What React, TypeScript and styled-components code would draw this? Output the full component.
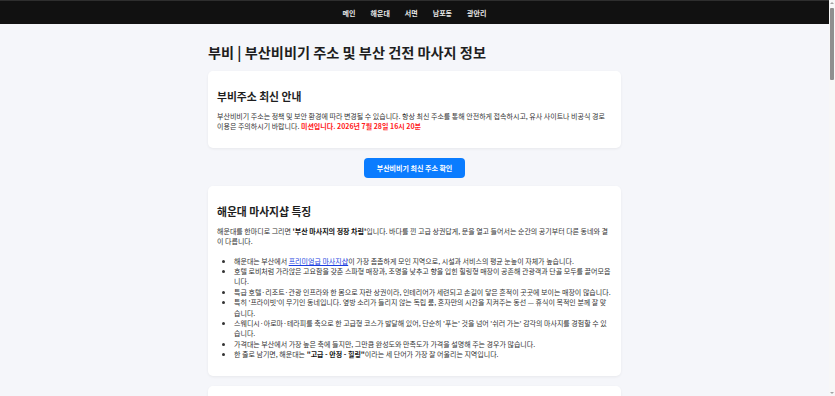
import React from "react";
import styled, { createGlobalStyle } from "styled-components";

const Global = createGlobalStyle`
  html, body { margin: 0; padding: 0; height: 100%; overflow: hidden; }
  #root { height: 100%; }
  body {
    background: #f5f6fa;
    font-family: "Noto Sans CJK KR", "Noto Sans", sans-serif;
    color: #333;
  }
`;

const Shell = styled.div`
  display: flex;
  height: 100vh;
`;

const Page = styled.div`
  flex: 1;
  min-width: 0;
  overflow-y: auto;
  background: #f5f6fa;
  &::-webkit-scrollbar { display: none; }
`;

const Rail = styled.div`
  width: 6px;
  flex: none;
  background: #f7f7f7;
  display: flex;
  flex-direction: column;
  align-items: center;
  padding: 2px 0;
  box-sizing: border-box;
`;

const Arrow = styled.div<{ $down?: boolean }>`
  width: 0;
  height: 0;
  border-left: 2px solid transparent;
  border-right: 2px solid transparent;
  ${(p) => (p.$down ? "border-top: 2px solid #a3a3a3;" : "border-bottom: 2px solid #a3a3a3;")}
  margin-top: ${(p) => (p.$down ? "auto" : "0")};
`;

const Thumb = styled.div`
  width: 4px;
  height: 72px;
  margin-top: 4px;
  background: #8f8f8f;
  border-radius: 1px;
`;

const Nav = styled.nav`
  height: 24px;
  background: #111;
  border-top: 1px solid #2e2e2e;
  box-sizing: border-box;
  display: flex;
  justify-content: center;
  align-items: center;
  gap: 15px;
`;

const NavLink = styled.a`
  color: #e8e8e8;
  font-size: 7px;
  font-weight: 700;
  text-decoration: none;
`;

const Main = styled.main`
  width: 413px;
  margin: 0 auto;
  padding: 20px 0 60px;
  display: flex;
  flex-direction: column;
`;

const Title = styled.h1`
  margin: 0 0 11px;
  font-size: 14.2px;
  line-height: 16px;
  font-weight: 700;
  color: #1e1e1e;
`;

const Card = styled.section`
  background: #fff;
  border-radius: 5px;
  box-shadow: 0 1px 3px rgba(0, 0, 0, 0.06);
  padding: 19px 9px 16px;
  margin-bottom: 10px;
`;

const CardTitle = styled.h2`
  margin: 0 0 8px;
  font-size: 10.8px;
  line-height: 13px;
  font-weight: 700;
  color: #1e1e1e;
`;

const Para = styled.p`
  margin: 0;
  font-size: 7px;
  line-height: 10.4px;
  color: #333;
`;

const Alert = styled.strong`
  color: #ff1a1a;
  font-weight: 700;
`;

const Strong = styled.strong`
  color: #111;
  font-weight: 700;
`;

const Link = styled.a`
  color: #1a3fe0;
  text-decoration: underline;
`;

const List = styled.ul`
  margin: 9px 0 0;
  padding-left: 17px;
  font-size: 7px;
  line-height: 10.4px;
  color: #333;
`;

const ButtonRow = styled.div`
  display: flex;
  justify-content: center;
  margin-bottom: 8px;
`;

const Button = styled.a`
  display: inline-block;
  background: #0a7cff;
  color: #fff;
  font-size: 7px;
  line-height: 8px;
  font-weight: 700;
  padding: 6px 13px;
  border-radius: 4px;
  text-decoration: none;
`;

export default function App() {
  return (
    <Shell>
      <Global />
      <Page>
        <Nav>
          <NavLink href="#">메인</NavLink>
          <NavLink href="#">해운대</NavLink>
          <NavLink href="#">서면</NavLink>
          <NavLink href="#">남포동</NavLink>
          <NavLink href="#">광안리</NavLink>
        </Nav>
        <Main>
          <Title>부비 | 부산비비기 주소 및 부산 건전 마사지 정보</Title>
          <Card>
            <CardTitle>부비주소 최신 안내</CardTitle>
            <Para>
              부산비비기 주소는 정책 및 보안 환경에 따라 변경될 수 있습니다. 항상 최신 주소를 통해
              안전하게 접속하시고, 유사 사이트나 비공식 경로 이용은 주의하시기 바랍니다.{" "}
              <Alert>미션입니다. 2026년 7월 28일 16시 20분</Alert>
            </Para>
          </Card>
          <ButtonRow>
            <Button href="#">부산비비기 최신 주소 확인</Button>
          </ButtonRow>
          <Card>
            <CardTitle>해운대 마사지샵 특징</CardTitle>
            <Para>
              해운대를 한마디로 그리면 <Strong>'부산 마사지의 정장 차림'</Strong>입니다. 바다를 낀 고급
              상권답게, 문을 열고 들어서는 순간의 공기부터 다른 동네와 결이 다릅니다.
            </Para>
            <List>
              <li>
                해운대는 부산에서 <Link href="#">프리미엄급 마사지샵</Link>이 가장 촘촘하게 모인
                지역으로, 시설과 서비스의 평균 눈높이 자체가 높습니다.
              </li>
              <li>
                호텔 로비처럼 가라앉은 고요함을 갖춘 스파형 매장과, 조명을 낮추고 향을 입힌 힐링형
                매장이 공존해 관광객과 단골 모두를 끌어모읍니다.
              </li>
              <li>
                특급 호텔·리조트·관광 인프라와 한 몸으로 자란 상권이라, 인테리어가 세련되고 손길이
                닿은 흔적이 곳곳에 보이는 매장이 많습니다.
              </li>
              <li>
                특히 '프라이빗'이 무기인 동네입니다. 옆방 소리가 들리지 않는 독립 룸, 혼자만의 시간을
                지켜주는 동선 — 휴식이 목적인 분께 잘 맞습니다.
              </li>
              <li>
                스웨디시·아로마·테라피를 축으로 한 고급형 코스가 발달해 있어, 단순히 '푸는' 것을 넘어
                '쉬러 가는' 감각의 마사지를 경험할 수 있습니다.
              </li>
              <li>
                가격대는 부산에서 가장 높은 축에 들지만, 그만큼 완성도와 만족도가 가격을 설명해 주는
                경우가 많습니다.
              </li>
              <li>
                한 줄로 남기면, 해운대는 <Strong>"고급 - 안정 - 힐링"</Strong>이라는 세 단어가 가장 잘
                어울리는 지역입니다.
              </li>
            </List>
          </Card>
          <Card>
            <CardTitle>서면 마사지샵 특징</CardTitle>
            <Para>
              서면은 부산의 한가운데, 교통과 상권이 모두 모이는 곳입니다. 퇴근길이나 약속 사이에
              부담 없이 들르기 좋은 매장이 많습니다.
            </Para>
            <List>
              <li>지하철 환승역을 중심으로 매장이 넓게 퍼져 있어 접근성이 뛰어납니다.</li>
              <li>합리적인 가격대의 코스가 다양해 처음 방문하는 분께도 부담이 적습니다.</li>
              <li>늦은 시간까지 운영하는 매장이 많아 일정에 맞춰 이용하기 편합니다.</li>
            </List>
          </Card>
          <Card>
            <CardTitle>남포동 마사지샵 특징</CardTitle>
            <Para>
              남포동은 오래된 상권의 정취와 관광지의 활기가 함께 있는 동네입니다. 쇼핑과 먹거리
              사이에 잠시 쉬어 가기 좋은 매장이 곳곳에 있습니다.
            </Para>
            <List>
              <li>관광객 동선에 맞춘 짧은 코스가 잘 갖춰져 있습니다.</li>
              <li>전통적인 지압·발 마사지 매장이 많아 피로 회복에 좋습니다.</li>
            </List>
          </Card>
          <Card>
            <CardTitle>광안리 마사지샵 특징</CardTitle>
            <Para>
              광안리는 바다와 야경이 어우러진 휴식의 동네입니다. 해변 산책 뒤 조용히 몸을 풀기 좋은
              감성적인 매장이 많습니다.
            </Para>
            <List>
              <li>오션뷰를 살린 인테리어의 매장이 많아 분위기가 좋습니다.</li>
              <li>커플 코스와 아로마 코스가 특히 인기가 많습니다.</li>
            </List>
          </Card>
        </Main>
      </Page>
      <Rail>
        <Arrow />
        <Thumb />
        <Arrow $down />
      </Rail>
    </Shell>
  );
}
